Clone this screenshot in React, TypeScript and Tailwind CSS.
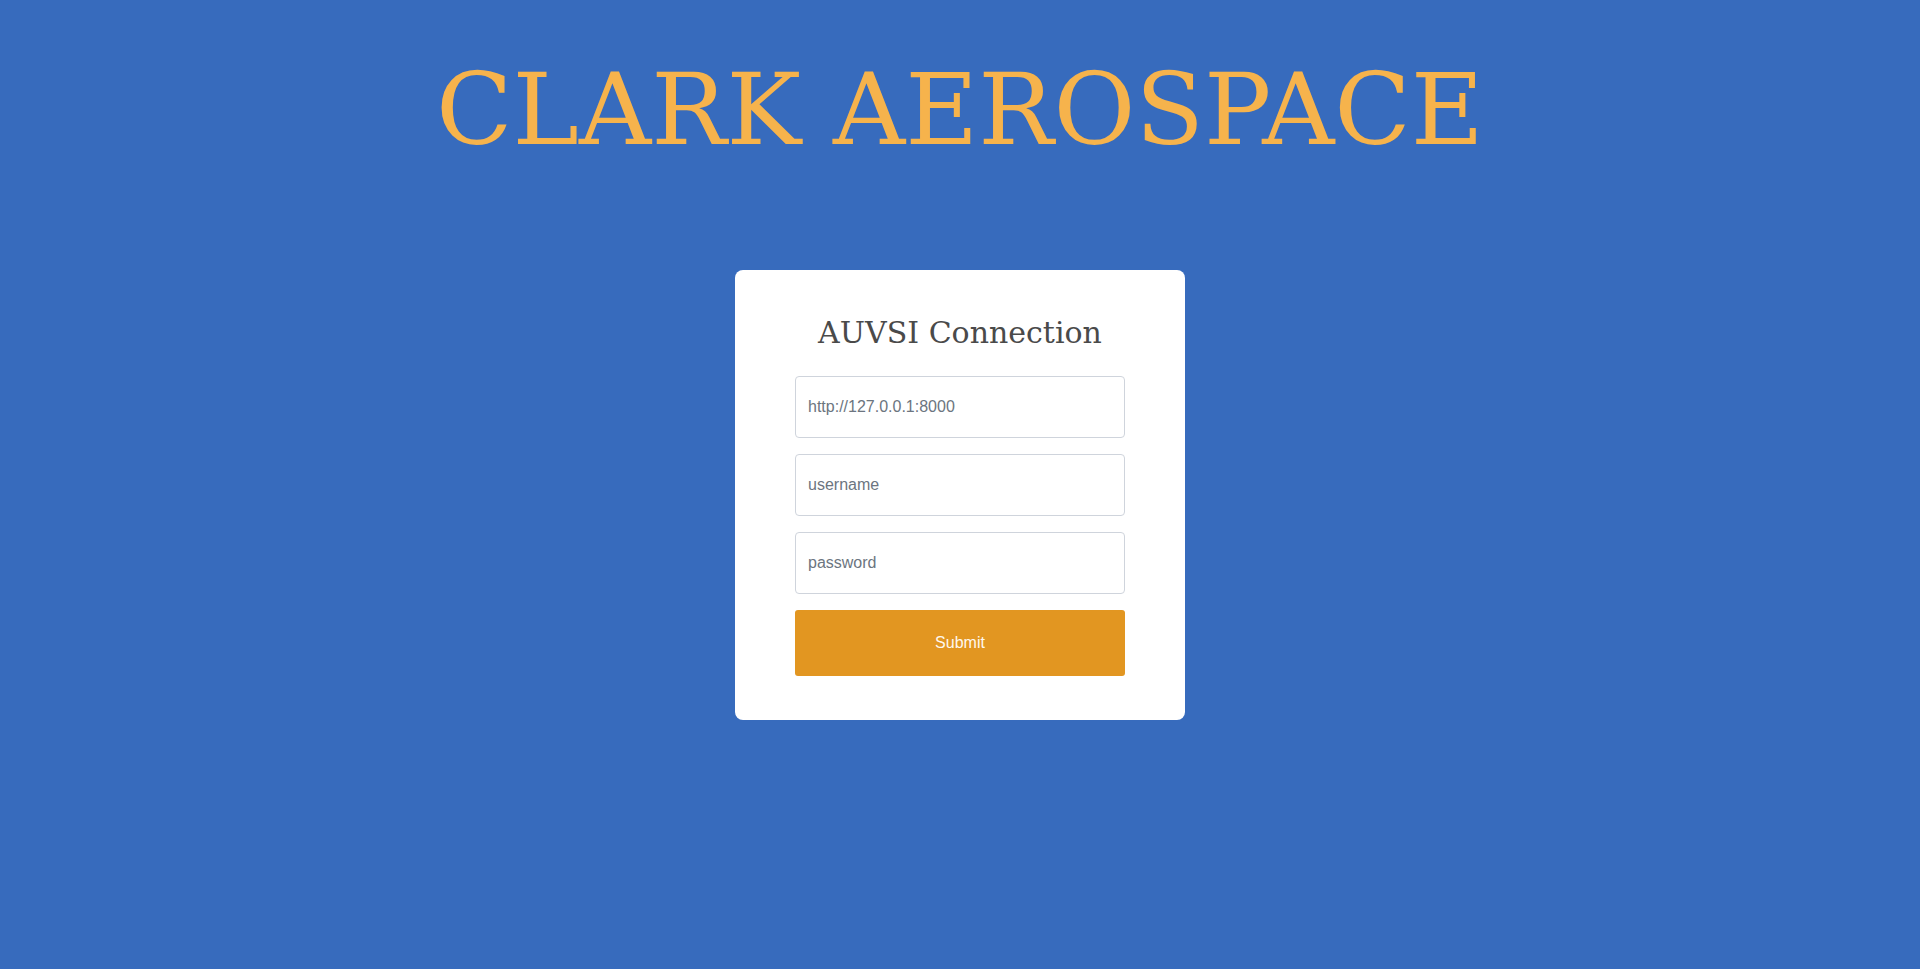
import React from "react";

export default function App() {
  return (
    <div className="min-h-[969px] w-full bg-[#376bbd] flex flex-col items-center" style={{}}>
      <h1 className="mt-[52px] text-[100px] leading-[116px] text-[#f6b34c] font-normal [font-family:'DejaVu_Serif',serif] whitespace-nowrap">
        CLARK AEROSPACE
      </h1>
      <div className="mt-[102px] w-[450px] h-[450px] bg-white rounded-[8px] pt-[45px] pb-[44px] px-[60px] flex flex-col">
        <h2 className="text-[30px] leading-[35px] text-[#4a4a4a] text-center font-normal [font-family:'DejaVu_Serif',serif]">
          AUVSI Connection
        </h2>
        <input
          className="mt-[26px] h-[62px] w-full border border-[#cfd4dc] rounded-[4px] px-[12px] text-[16px] text-[#333] placeholder:text-[#6c7580] outline-none [font-family:'Liberation_Sans',Arial,sans-serif]"
          placeholder="http://127.0.0.1:8000"
        />
        <input
          className="mt-[16px] h-[62px] w-full border border-[#cfd4dc] rounded-[4px] px-[12px] text-[16px] text-[#333] placeholder:text-[#6c7580] outline-none [font-family:'Liberation_Sans',Arial,sans-serif]"
          placeholder="username"
        />
        <input
          type="password"
          className="mt-[16px] h-[62px] w-full border border-[#cfd4dc] rounded-[4px] px-[12px] text-[16px] text-[#333] placeholder:text-[#6c7580] outline-none [font-family:'Liberation_Sans',Arial,sans-serif]"
          placeholder="password"
        />
        <button className="mt-[16px] h-[66px] w-full bg-[#e29621] rounded-[3px] text-[16px] text-[#fff8ee] [font-family:'Liberation_Sans',Arial,sans-serif]">
          Submit
        </button>
      </div>
    </div>
  );
}
